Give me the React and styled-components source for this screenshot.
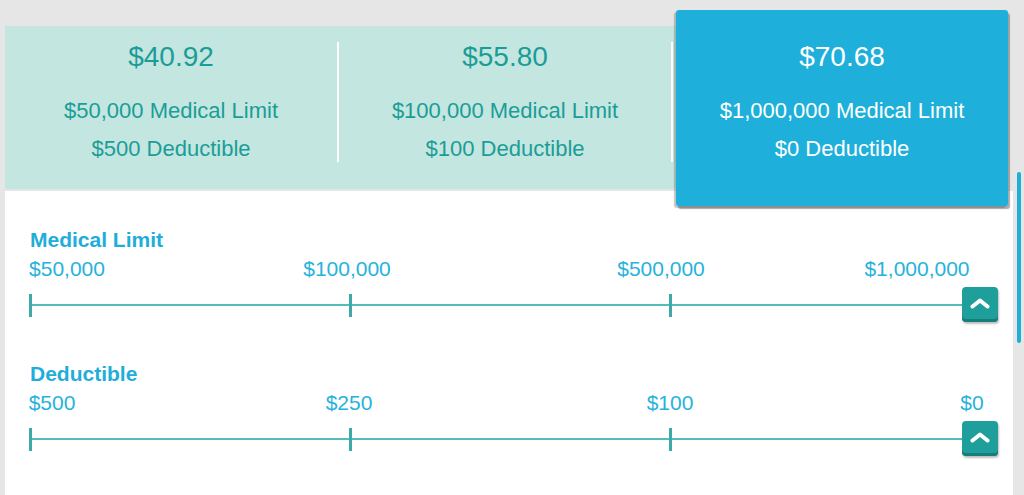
import React from "react";
import styled, { createGlobalStyle } from "styled-components";

const GlobalStyle = createGlobalStyle`
  html, body {
    margin: 0;
    padding: 0;
    height: 100%;
    background: #e6e6e6;
    font-family: "Liberation Sans", Arial, sans-serif;
  }
  * {
    box-sizing: border-box;
  }
`;

const Page = styled.div`
  display: flex;
  min-height: 100vh;
  padding: 26px 0 0 5px;
`;

const Main = styled.div`
  flex: 1;
  display: flex;
  flex-direction: column;
`;

const Gutter = styled.div`
  width: 11px;
  padding: 146px 0 0 4px;
`;

const ScrollThumb = styled.div`
  width: 4px;
  height: 171px;
  border-radius: 2px;
  background: #1eafd9;
`;

const Tiers = styled.div`
  display: flex;
  height: 163px;
  margin-right: 5px;
  background: #c3e6e0;
`;

const Divider = styled.div`
  width: 2px;
  margin: 16px 0 27px;
  background: #ffffff;
`;

const Tier = styled.div`
  flex: 1;
  display: flex;
  flex-direction: column;
  align-items: center;
  padding-top: ${(p) => (p.$selected ? "31px" : "15px")};
  margin: ${(p) => (p.$selected ? "-16px 0 -17px 3px" : "0")};
  color: ${(p) => (p.$selected ? "#ffffff" : "#1b9d97")};
  background: ${(p) => (p.$selected ? "#1eb0da" : "transparent")};
  border-radius: ${(p) => (p.$selected ? "3px" : "0")};
  box-shadow: ${(p) =>
    p.$selected
      ? "2px 3px 1px rgba(80, 90, 90, 0.5), -2px 2px 1px rgba(80, 90, 90, 0.35)"
      : "none"};
  position: relative;
  z-index: ${(p) => (p.$selected ? 2 : 0)};
`;

const Price = styled.div`
  font-size: 28px;
  line-height: 32px;
  margin-bottom: 19px;
`;

const TierLine = styled.div`
  font-size: 22px;
  line-height: 38px;
  white-space: nowrap;
`;

const Body = styled.div`
  flex: 1;
  margin-top: 2px;
  padding: 37px 15px 0 25px;
  background: #ffffff;
  display: flex;
  flex-direction: column;
  gap: 39px;
`;

const Slider = styled.div`
  display: flex;
  flex-direction: column;
`;

const SliderTitle = styled.div`
  font-size: 21px;
  line-height: 24px;
  font-weight: 700;
  color: #1fadd9;
`;

const TickLabels = styled.div`
  position: relative;
  height: 24px;
  margin-top: 5px;
`;

const TickLabel = styled.span`
  position: absolute;
  top: 0;
  transform: translateX(-50%);
  font-size: 21px;
  line-height: 24px;
  color: #27b2dd;
  white-space: nowrap;
`;

const Track = styled.div`
  position: relative;
  height: 36px;
  margin-top: 6px;
`;

const Line = styled.div`
  position: absolute;
  left: 0;
  right: 30px;
  top: 17px;
  height: 2px;
  background: #55bcbc;
`;

const Tick = styled.div`
  position: absolute;
  top: 7px;
  width: 3px;
  height: 23px;
  margin-left: -1px;
  background: #3eaaa7;
`;

const Thumb = styled.div`
  position: absolute;
  right: 0;
  top: 0;
  width: 36px;
  height: 35px;
  display: flex;
  align-items: center;
  justify-content: center;
  padding-bottom: 3px;
  border-radius: 4px;
  background: #1e9f9b;
  box-shadow: inset 0 -3px 0 #157e7a, 1px 2px 2px rgba(0, 0, 0, 0.25);
`;

const sliders = [
  {
    title: "Medical Limit",
    labels: [
      { text: "$50,000", at: 37 },
      { text: "$100,000", at: 317 },
      { text: "$500,000", at: 631 },
      { text: "$1,000,000", at: 887 },
    ],
  },
  {
    title: "Deductible",
    labels: [
      { text: "$500", at: 22 },
      { text: "$250", at: 319 },
      { text: "$100", at: 640 },
      { text: "$0", at: 942 },
    ],
  },
];

const tiers = [
  { price: "$40.92", limit: "$50,000", deductible: "$500" },
  { price: "$55.80", limit: "$100,000", deductible: "$100" },
  { price: "$70.68", limit: "$1,000,000", deductible: "$0", selected: true },
];

const ticks = [0, 320, 640];

function Chevron() {
  return (
    <svg width="20" height="11" viewBox="0 0 20 11">
      <polyline
        points="2.5,8.5 10,2.5 17.5,8.5"
        fill="none"
        stroke="#ffffff"
        strokeWidth="4"
        strokeLinecap="round"
        strokeLinejoin="round"
      />
    </svg>
  );
}

export default function App() {
  return (
    <>
      <GlobalStyle />
      <Page>
        <Main>
          <Tiers>
            {tiers.map((tier, i) => (
              <React.Fragment key={tier.price}>
                {i > 0 && <Divider />}
                <Tier $selected={tier.selected}>
                  <Price>{tier.price}</Price>
                  <TierLine>{tier.limit} Medical Limit</TierLine>
                  <TierLine>{tier.deductible} Deductible</TierLine>
                </Tier>
              </React.Fragment>
            ))}
          </Tiers>

          <Body>
            {sliders.map((slider) => (
              <Slider key={slider.title}>
                <SliderTitle>{slider.title}</SliderTitle>
                <TickLabels>
                  {slider.labels.map((label) => (
                    <TickLabel key={label.text} style={{ left: label.at }}>
                      {label.text}
                    </TickLabel>
                  ))}
                </TickLabels>
                <Track>
                  <Line />
                  {ticks.map((x) => (
                    <Tick key={x} style={{ left: x }} />
                  ))}
                  <Thumb>
                    <Chevron />
                  </Thumb>
                </Track>
              </Slider>
            ))}
          </Body>
        </Main>
        <Gutter>
          <ScrollThumb />
        </Gutter>
      </Page>
    </>
  );
}
